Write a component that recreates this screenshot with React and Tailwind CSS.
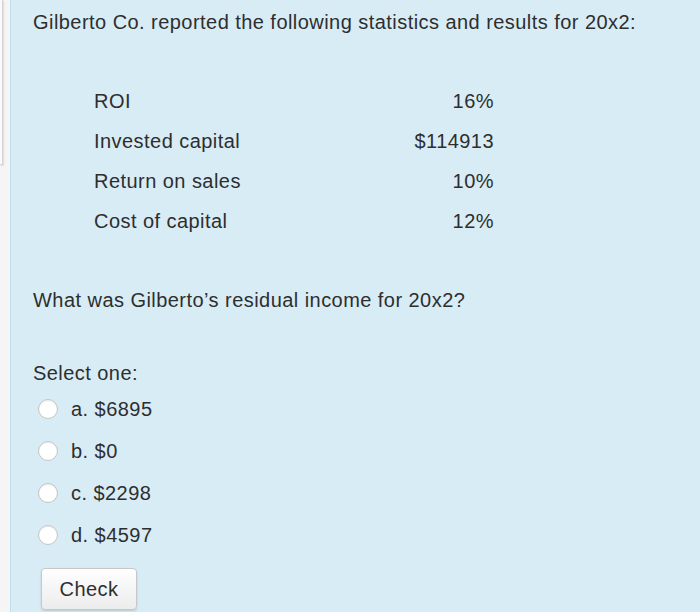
export default function App() {
  const rows = [
    ["ROI", "16%"],
    ["Invested capital", "$114913"],
    ["Return on sales", "10%"],
    ["Cost of capital", "12%"],
  ];
  const opts = ["a. $6895", "b. $0", "c. $2298", "d. $4597"];
  return (
    <div
      className="w-[700px] h-[612px] flex bg-[#f5f5f5] overflow-hidden text-[#2e2e2e] tracking-[0.45px]"
      style={{ fontFamily: '"Liberation Sans", Arial, sans-serif' }}
    >
      <div className="w-[10px] shrink-0">
        <div className="w-[3px] h-[165px] bg-[#fafafa] border-r border-b border-[#d4d4d4] shadow-[1px_1px_2px_rgba(0,0,0,0.1)]" />
      </div>
      <div className="flex-1 bg-[#d8ecf6] border-l border-[#c2dfee] pl-[22px] pt-[12px]">
        <p className="text-[20px] leading-[20px]">
          Gilberto Co. reported the following statistics and results for 20x2:
        </p>
        <div className="ml-[61px] mt-[49px] w-[400px] flex flex-col">
          {rows.map(([l, v]) => (
            <div key={l} className="h-[40px] flex items-center justify-between text-[20px]">
              <span>{l}</span>
              <span>{v}</span>
            </div>
          ))}
        </div>
        <p className="text-[20px] leading-[20px] mt-[49px]">
          What was Gilberto’s residual income for 20x2?
        </p>
        <p className="text-[20px] leading-[20px] mt-[53px]">Select one:</p>
        <div className="mt-[5px] flex flex-col">
          {opts.map((o) => (
            <div key={o} className="h-[42px] flex items-center text-[20px]">
              <span className="ml-[5px] w-[20px] h-[20px] rounded-full bg-white border border-[#c4c4c4] shadow-[inset_0_1px_1px_rgba(0,0,0,0.08)]" />
              <span className="ml-[13px]">{o}</span>
            </div>
          ))}
        </div>
        <button className="mt-[12px] ml-[8px] w-[96px] h-[42px] rounded-[4px] border border-[#c8c8c8] bg-gradient-to-b from-[#ffffff] to-[#ececec] shadow-[0_1px_2px_rgba(0,0,0,0.15)] text-[20px] text-[#2e2e2e] tracking-[0.45px]">
          Check
        </button>
      </div>
    </div>
  );
}
